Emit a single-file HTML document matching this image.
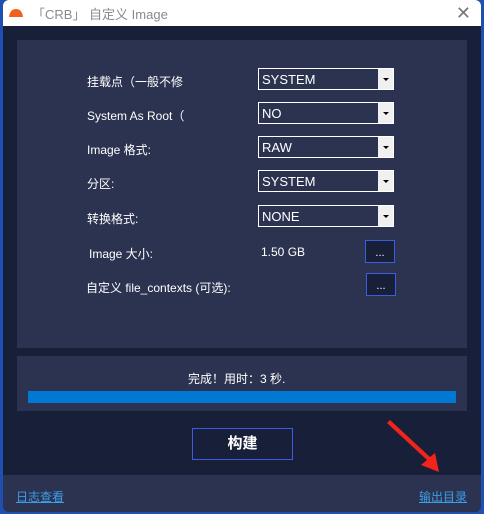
<!DOCTYPE html><html><head><style>
body{margin:0;width:484px;height:514px;background:#1f4fb0;position:relative;overflow:hidden;font-family:"Liberation Sans","Noto Sans CJK SC",sans-serif}
.win{position:absolute;left:3px;top:0;width:478px;height:512px;background:#181f38;border-radius:6px;overflow:hidden}
.tb{position:absolute;left:0;top:0;width:478px;height:26px;background:#fff}
.tt{position:absolute;left:29px;top:4px;font-size:13px;color:#8a8a8a}
.x{position:absolute;right:10px;top:3px;font-size:18px;color:#777}
.p{position:absolute;background:#2c3350}
.l{position:absolute;left:84px;color:#fff;font-size:12px}
.dd{position:absolute;left:255px;width:134px;height:20px;border:1px solid #fff;background:#2c3350;color:#fff;font-size:13px}
.dd span{position:absolute;left:3px;top:3px}
.dd i{position:absolute;right:0;top:0;width:15px;height:20px;background:#f0f0f0}
.dd i:after{content:"";position:absolute;left:5px;top:9px;border:3px solid transparent;border-top:3px solid #000}
.bb{position:absolute;width:28px;height:21px;border:1px solid #3d5ce0;background:#181f38;color:#fff;font-size:11px;text-align:center;line-height:24px}
a{position:absolute;color:#3a9ee8;font-size:12px;text-decoration:underline}
</style></head><body><div class="win">
<div class="tb"><svg style="position:absolute;left:5px;top:7px" width="16" height="10"><path d="M1 10 Q2 2 8 2 Q14 2 15 10Z" fill="#f0621c"/></svg><div class="tt">「CRB」 自定义 Image</div><div class="x">✕</div></div>
<div class="p" style="left:14px;top:40px;width:450px;height:308px"></div>
<div class="l" style="top:73px">挂载点（一般不修</div><div class="dd" style="top:68px"><span>SYSTEM</span><i></i></div>
<div class="l" style="top:107px">System As Root（</div><div class="dd" style="top:102px"><span>NO</span><i></i></div>
<div class="l" style="top:141px">Image 格式:</div><div class="dd" style="top:136px"><span>RAW</span><i></i></div>
<div class="l" style="top:175px">分区:</div><div class="dd" style="top:170px"><span>SYSTEM</span><i></i></div>
<div class="l" style="top:210px">转换格式:</div><div class="dd" style="top:205px"><span>NONE</span><i></i></div>
<div class="l" style="top:245px;left:86px">Image 大小:</div><div class="l" style="top:245px;left:258px">1.50 GB</div><div class="bb" style="left:362px;top:240px">...</div>
<div class="l" style="top:279px;left:83px">自定义 file_contexts (可选):</div><div class="bb" style="left:363px;top:273px">...</div>
<div class="p" style="left:14px;top:356px;width:450px;height:55px"></div>
<div class="l" style="top:370px;left:185px">完成！用时：3 秒.</div>
<div style="position:absolute;left:25px;top:391px;width:428px;height:12px;background:#0078d4"></div>
<div style="position:absolute;left:189px;top:428px;width:99px;height:30px;border:1px solid #3d5ce0;color:#fff;font-weight:bold;font-size:15px;text-align:center;line-height:30px">构建</div>
<div class="p" style="left:0;top:475px;width:478px;height:37px"></div>
<a style="left:13px;top:488px">日志查看</a><a style="left:416px;top:488px">输出目录</a>
<svg style="position:absolute;left:380px;top:420px" width="70" height="60"><path d="M4 3 L44 40 L38 45 L56 52 L52 33 L47 37 L7 0Z" fill="#f0241a"/></svg>
</div></body></html>
